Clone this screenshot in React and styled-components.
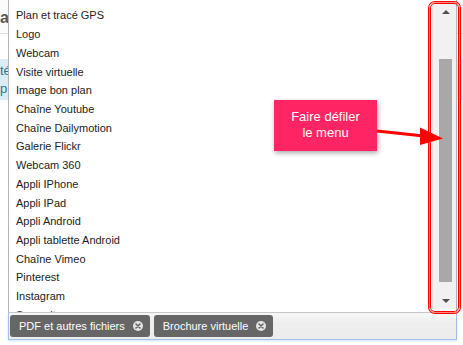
import React from "react";
import styled, { createGlobalStyle } from "styled-components";

const Global = createGlobalStyle`
  html, body { margin: 0; padding: 0; background: #fff; }
  body { font-family: "Liberation Sans", Arial, sans-serif; }
  * { box-sizing: border-box; }
`;

const Stage = styled.div`
  position: relative;
  width: 463px;
  height: 345px;
  overflow: hidden;
  background: #fff;
`;

const PageHeader = styled.div`
  height: 34px;
  border-bottom: 1px solid #dcdcdc;
  display: flex;
  align-items: center;
  padding-top: 2px;
  background: #fbfbfb;
`;

const PageTitle = styled.h2`
  margin: 0;
  font-size: 16px;
  font-weight: bold;
  color: #555;
  letter-spacing: 0;
`;

const InfoBox = styled.div`
  margin-top: 25px;
  height: 41px;
  background: #d9edf7;
  color: #31708f;
  font-size: 13px;
  line-height: 18px;
  padding-top: 3px;
`;

const InfoLine = styled.div`
  white-space: nowrap;
`;

const Overlay = styled.div`
  position: absolute;
  left: 8px;
  top: 0;
  width: 449px;
  display: flex;
  flex-direction: column;
`;

const Dropdown = styled.div`
  height: 313px;
  background: #fff;
  border-left: 1px solid #b5b5b5;
  border-right: 1px solid #b5b5b5;
  border-bottom: 1px solid #c9c9c9;
  display: flex;
`;

const List = styled.ul`
  flex: 1;
  margin: 0;
  padding: 6.4px 0 0 0;
  list-style: none;
  overflow: hidden;
`;

const Item = styled.li`
  height: 18.73px;
  line-height: 18.73px;
  padding-left: 7px;
  font-size: 11px;
  color: #222;
  white-space: nowrap;
`;

const Scrollbar = styled.div`
  width: 24px;
  margin: 3px 0;
  background: #f1f1f1;
  border-left: 1px solid #e6e6e6;
  display: grid;
  grid-template-rows: 17px 1fr 17px;
`;

const ScrollButton = styled.div`
  display: flex;
  align-items: center;
  justify-content: center;
  padding-left: 2px;
  &::before {
    content: "";
    width: 0;
    height: 0;
    border-left: 4px solid transparent;
    border-right: 4px solid transparent;
    ${(p) =>
      p.$dir === "up"
        ? "border-bottom: 4px solid #505050;"
        : "border-top: 4px solid #505050;"}
  }
`;

const Track = styled.div`
  display: flex;
  justify-content: center;
  padding-left: 2px;
`;

const Thumb = styled.div`
  width: 13px;
  background: #a8a8a8;
`;

const TagBar = styled.div`
  height: 27px;
  border: 1px solid #9cc0ef;
  border-top: none;
  background: linear-gradient(to bottom, #f7f7f7 0%, #eeeeee 40%, #ededed 100%);
  box-shadow: 0 1px 2px rgba(88, 151, 251, 0.25);
  display: flex;
  align-items: flex-start;
  gap: 4px;
  padding: 2px 0 0 1px;
`;

const Tag = styled.div`
  height: 22px;
  background: #666;
  border-radius: 3px;
  color: #fff;
  font-size: 11px;
  display: flex;
  align-items: center;
  padding: 0 7px 0 9px;
  white-space: nowrap;
`;

const TagClose = styled.span`
  margin-left: 8px;
  width: 10px;
  height: 10px;
  border-radius: 50%;
  background: #e4e4e4;
  display: inline-flex;
  align-items: center;
  justify-content: center;
`;

const Callout = styled.div`
  position: absolute;
  left: 274px;
  top: 100px;
  width: 103px;
  height: 51px;
  background: #ff2463;
  box-shadow: 1px 2px 5px rgba(0, 0, 0, 0.35);
  color: #fff;
  font-size: 13px;
  line-height: 16px;
  text-align: center;
  padding-top: 9px;
`;

const Highlight = styled.div`
  position: absolute;
  left: 429px;
  top: 2px;
  width: 31px;
  height: 311px;
  border: 1px solid #ff8a8a;
  border-radius: 6px;
  box-shadow: 0 0 0 1px #f00, inset 0 0 0 1px #f00;
`;

const ArrowSvg = styled.svg`
  position: absolute;
  left: 0;
  top: 0;
  pointer-events: none;
`;

const items = [
  "Plan et tracé GPS",
  "Logo",
  "Webcam",
  "Visite virtuelle",
  "Image bon plan",
  "Chaîne Youtube",
  "Chaîne Dailymotion",
  "Galerie Flickr",
  "Webcam 360",
  "Appli IPhone",
  "Appli IPad",
  "Appli Android",
  "Appli tablette Android",
  "Chaîne Vimeo",
  "Pinterest",
  "Instagram",
  "Scoop.it",
];

const CloseIcon = () => (
  <TagClose>
    <svg width="6" height="6" viewBox="0 0 6 6">
      <path d="M1 1L5 5M5 1L1 5" stroke="#666" strokeWidth="1.6" strokeLinecap="round" />
    </svg>
  </TagClose>
);

export default function App() {
  return (
    <Stage>
      <Global />
      <PageHeader>
        <PageTitle>a</PageTitle>
      </PageHeader>
      <InfoBox>
        <InfoLine>té</InfoLine>
        <InfoLine>p</InfoLine>
      </InfoBox>

      <Overlay>
        <Dropdown>
          <List>
            {items.map((t) => (
              <Item key={t}>{t}</Item>
            ))}
          </List>
          <Scrollbar>
            <ScrollButton $dir="up" />
            <Track>
              <Thumb style={{ marginTop: 39, height: 223 }} />
            </Track>
            <ScrollButton $dir="down" />
          </Scrollbar>
        </Dropdown>
        <TagBar>
          <Tag>
            PDF et autres fichiers
            <CloseIcon />
          </Tag>
          <Tag>
            Brochure virtuelle
            <CloseIcon />
          </Tag>
        </TagBar>
      </Overlay>

      <Highlight />
      <Callout>
        Faire défiler
        <br />
        le menu
      </Callout>
      <ArrowSvg width="463" height="345" viewBox="0 0 463 345">
        <line x1="377" y1="131" x2="424" y2="136" stroke="#f00" strokeWidth="3" />
        <polygon points="420,127.5 443,138.5 420,145" fill="#f00" />
      </ArrowSvg>
    </Stage>
  );
}
